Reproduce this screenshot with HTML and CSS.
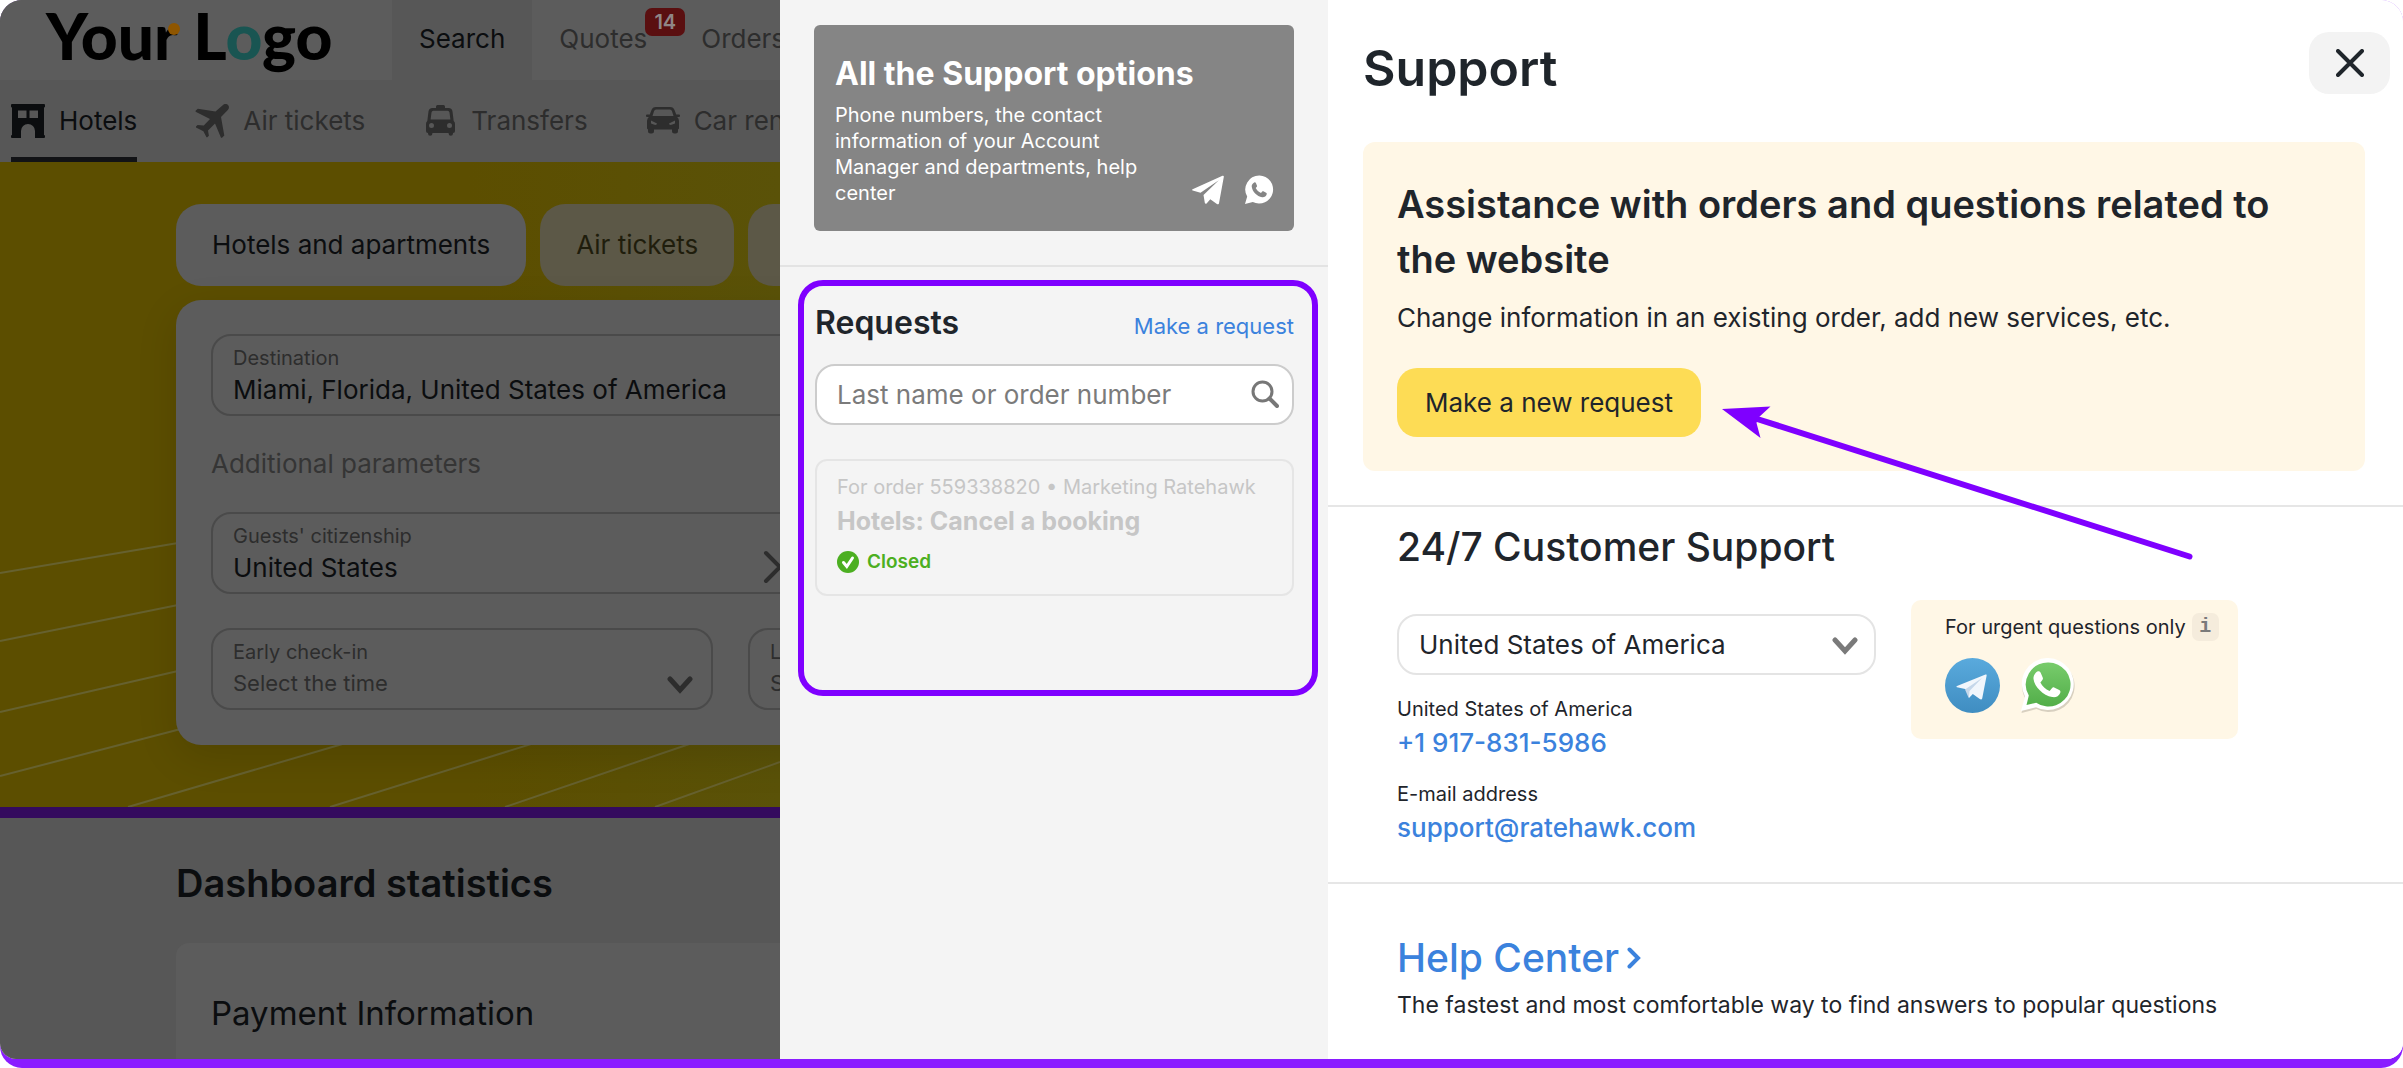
FILE: index.html
```html
<!DOCTYPE html>
<html lang="en">
<head>
<meta charset="utf-8">
<meta name="viewport" content="width=device-width, initial-scale=1">
<title>Support</title>
<link rel="stylesheet" href="styles.css">
</head>
<body>
<div class="frame">
  <div class="columns">

    <div class="site">
      <header class="site-header">
        <a class="logo" href="#">You<span class="logo-r">r</span> L<span class="logo-o">o</span>go</a>
        <nav class="tabs" aria-label="Main">
          <a class="tab tab-active" href="#">Search</a>
          <a class="tab" href="#">Quotes<span class="badge">14</span></a>
          <a class="tab" href="#">Orders</a>
        </nav>
      </header>

      <nav class="products" aria-label="Products">
        <a class="product product-active" href="#">
          <svg class="product-icon" viewBox="0 0 34 34" fill="currentColor"><path fill-rule="evenodd" d="M1 0h32a1 1 0 0 1 1 1v1.500a1 1 0 0 1-1 1V31a1 1 0 0 1 1 1v1a1 1 0 0 1-1 1h-9v-7a7 7 0 0 0-14 0v7H1a1 1 0 0 1-1-1v-1a1 1 0 0 1 1-1V3.500a1 1 0 0 1-1-1V1a1 1 0 0 1 1-1ZM7 6.500V14h8.500V6.500ZM18.500 6.500V14H27V6.500Z"/></svg>
          <span>Hotels</span>
        </a>
        <a class="product" href="#">
          <svg class="product-icon" viewBox="0 0 34 34" fill="currentColor"><path d="M33 1c1.400 1.400 1.200 3.400-.2 4.900L26 13l3.300 18.500-2.300 2.300h-1L20 19.500l-7 7 .9 5.200-1.600 1.600h-.8L8.400 27.300 1 23.400v-.9l1.600-1.600 6.200.7 6.200-6.700L.6 7.800v-1l2.200-2 17.700 2.700L28 1c1.500-1.400 3.600-1.400 5 0Z"/></svg>
          <span>Air tickets</span>
        </a>
        <a class="product" href="#">
          <svg class="product-icon" viewBox="0 0 34 34" fill="currentColor"><path fill-rule="evenodd" d="M13 2.500a1.500 1.500 0 0 1 1.500-1.500h6A1.500 1.500 0 0 1 22 2.500V4h3.500a4 4 0 0 1 4 3.500l1.200 9.500a4 4 0 0 1 1.300 3v7a2 2 0 0 1-2 2v.5a2.200 2.200 0 0 1-4.400 0V29H9.400v.5a2.200 2.200 0 0 1-4.400 0V29a2 2 0 0 1-2-2v-7a4 4 0 0 1 1.300-3l1.200-9.500a4 4 0 0 1 4-3.500H13ZM10.500 6.800a2 2 0 0 0-2 1.700L7.600 15.500h19.800l-.9-7a2 2 0 0 0-2-1.700ZM8.500 19a2.500 2.500 0 1 0 0 5 2.500 2.500 0 0 0 0-5ZM26.500 19a2.500 2.500 0 1 0 0 5 2.500 2.500 0 0 0 0-5Z"/></svg>
          <span>Transfers</span>
        </a>
        <a class="product" href="#">
          <svg class="product-icon" viewBox="0 0 34 34" fill="currentColor"><path fill-rule="evenodd" d="M10 3h14a5 5 0 0 1 4.700 3.400l1.500 4.100H33a1 1 0 0 1 1 1V12a1 1 0 0 1-1 1h-1.800A6 6 0 0 1 33 17v7.500l-1 1V27a2.500 2.500 0 0 1-2.500 2.500h-1A2.500 2.500 0 0 1 26 27v-1.500H8V27a2.500 2.500 0 0 1-2.500 2.500h-1A2.500 2.500 0 0 1 2 27v-1.500l-1-1V17a6 6 0 0 1 1.800-4H1a1 1 0 0 1-1-1v-.5a1 1 0 0 1 1-1h2.800l1.500-4.100A5 5 0 0 1 10 3ZM10.200 5.500A2.500 2.500 0 0 0 8 7.200L6.500 12h21L26 7.200a2.500 2.500 0 0 0-2.200-1.700ZM5 16.500v3l3.500 1.300c1.500.4 2.500-.3 2.500-1.300ZM29 16.500v3l-3.500 1.300c-1.500.4-2.500-.3-2.500-1.300Z"/></svg>
          <span>Car rental</span>
        </a>
      </nav>

      <section class="hero">
        <svg class="hero-lines" viewBox="0 0 780 645" preserveAspectRatio="xMinYMax slice" aria-hidden="true">
          <path d="M0 411 178 381M0 479 178 443M0 550 178 509M0 614 200 562M128 645 380 571M330 645 560 573M505 645 710 575M655 645 780 600" fill="none" stroke="#66612f" stroke-width="2"/>
        </svg>
        <div class="search-tabs">
          <button class="search-tab search-tab-active" type="button">Hotels and apartments</button>
          <button class="search-tab" type="button">Air tickets</button>
          <button class="search-tab" type="button" aria-label="Transfers"></button>
        </div>
        <form class="search-card">
          <div class="field">
            <label for="destination">Destination</label>
            <input id="destination" type="text" value="Miami, Florida, United States of America">
          </div>
          <p class="search-more">Additional parameters</p>
          <div class="field">
            <label for="citizenship">Guests' citizenship</label>
            <input id="citizenship" type="text" value="United States">
            <svg class="field-next" viewBox="0 0 20 34"><path d="m3 3 14 14L3 31" fill="none" stroke="#2d2d2d" stroke-width="4" stroke-linecap="round"/></svg>
          </div>
          <div class="field-row">
            <div class="field">
              <label for="checkin">Early check-in</label>
              <select id="checkin"><option>Select the time</option></select>
              <svg class="field-arrow" viewBox="0 0 26 18"><path d="m3 3 10 11L23 3" fill="none" stroke="#2d2d2d" stroke-width="5" stroke-linecap="round"/></svg>
            </div>
            <div class="field">
              <label for="checkout">Late check-out</label>
              <select id="checkout"><option>Select the time</option></select>
            </div>
          </div>
        </form>
      </section>

      <section class="stats">
        <h2>Dashboard statistics</h2>
        <div class="stats-card"><h3>Payment Information</h3></div>
      </section>
    </div>

    <aside class="requests-panel">
      <div class="options-wrap">
        <a class="options" href="#">
          <strong>All the Support options</strong>
          <span class="options-text">Phone numbers, the contact information of your Account Manager and departments, help center</span>
          <span class="options-icons">
            <svg width="32" height="30" viewBox="0 0 32 30" fill="#fff"><path d="M.6 14.200 30.500.8c.9-.4 1.500.1 1.300 1.100L27 28.200c-.2 1.200-1.200 1.500-2.100.8l-6.600-4.800-3.500 4c-.8.9-1.800.6-2-.5L11.500 20 26.800 5.200 8.500 17.800.7 15.500c-.8-.2-.8-.9-.1-1.300Z"/></svg>
            <svg width="30" height="30" viewBox="0 0 30 30"><path d="M15.500.5A14 14 0 0 0 3.200 21.500L1 29l7.800-2A14 14 0 1 0 15.500.5Z" fill="#fff"/><path d="M10.300 7.500c.7-.4 1.400 0 1.700.7l1 2.500c.2.500 0 1-.4 1.400l-.9 1c1.100 2.300 2.900 4 5.300 5l1.200-1.500c.3-.4.8-.5 1.200-.3l2.700 1.400c.6.300.8.800.6 1.500-.5 2-2.500 3.300-4.600 3-5-.6-9.900-5.600-10.400-10.600-.1-1.700 1-3.300 2.600-4.100Z" fill="#858585"/></svg>
          </span>
        </a>
      </div>

      <section class="requests">
        <div class="requests-head">
          <h2>Requests</h2>
          <a href="#">Make a request</a>
        </div>
        <div class="request-search">
          <input type="search" placeholder="Last name or order number" aria-label="Last name or order number">
          <svg width="28" height="28" viewBox="0 0 28 28" fill="none" stroke="#777" stroke-width="3" stroke-linecap="round"><circle cx="11.500" cy="11.500" r="9.500"/><path d="m18.500 18.500 7.500 7.500" stroke-width="4"/></svg>
        </div>
        <article class="request">
          <p class="request-meta">For order 559338820 • Marketing Ratehawk</p>
          <h3>Hotels: Cancel a booking</h3>
          <p class="request-status">
            <svg width="22" height="22" viewBox="0 0 22 22"><circle cx="11" cy="11" r="11" fill="#4caf21"/><path d="m6.500 11.500 3.300 4L15.500 7" fill="none" stroke="#fff" stroke-width="3" stroke-linecap="round"/></svg>
            Closed
          </p>
        </article>
      </section>
    </aside>

    <main class="support">
      <header class="support-head">
        <h1>Support</h1>
        <button class="close" type="button" aria-label="Close">
          <svg width="28" height="28" viewBox="0 0 28 28"><path d="m2 2 24 24M26 2 2 26" fill="none" stroke="#1f252b" stroke-width="4" stroke-linecap="round"/></svg>
        </button>
      </header>

      <section class="assist">
        <h2>Assistance with orders and questions related to the website</h2>
        <p>Change information in an existing order, add new services, etc.</p>
        <div class="assist-action">
          <button class="primary" type="button">Make a new request</button>
          <svg class="pointer" width="474" height="158" viewBox="0 0 474 158" aria-hidden="true"><path d="M2 5 50.500 2.500 38 14 36.500 19 40.500 34Z" fill="#7f00ff"/><path d="m34 14 435.500 138.500" stroke="#7f00ff" stroke-width="6" stroke-linecap="round"/></svg>
        </div>
      </section>

      <section class="contact">
        <h2>24/7 Customer Support</h2>
        <div class="contact-row">
          <div class="contact-main">
            <div class="country">
              <select aria-label="Country"><option>United States of America</option></select>
              <svg width="26" height="18" viewBox="0 0 26 18"><path d="m3 3 10 11L23 3" fill="none" stroke="#7a7a7a" stroke-width="5" stroke-linecap="round"/></svg>
            </div>
            <p class="contact-item">United States of America<a href="tel:+19178315986">+1 917-831-5986</a></p>
            <p class="contact-item">E-mail address<a href="mailto:support@ratehawk.com">support@ratehawk.com</a></p>
          </div>
          <aside class="urgent">
            <p class="urgent-title">For urgent questions only<button class="info" type="button" aria-label="More information">i</button></p>
            <div class="urgent-links">
              <a href="#" aria-label="Telegram"><svg width="55" height="55" viewBox="0 0 55 55"><defs><linearGradient id="tg" x1="0" y1="0" x2="0" y2="1"><stop offset="0" stop-color="#5aaadd"/><stop offset="1" stop-color="#3f8dc1"/></linearGradient></defs><circle cx="27.500" cy="27.500" r="27.500" fill="url(#tg)"/><path d="M12 28 40.500 16.500c.9-.3 1.300.1 1.100 1.200L37.300 40c-.3 1.500-1.200 1.900-2.500 1.100l-7-5.100-3.800 3.900-1.500-8.500L12 29.300c-.7-.3-.7-.9 0-1.300Z" fill="#f1f6fc"/><path d="M20 31.500 37 20 24.500 33l-.7 7.300Z" fill="#c5d7ea"/></svg></a>
              <a href="#" aria-label="WhatsApp"><svg width="55" height="55" viewBox="0 0 55 55"><defs><linearGradient id="wa" x1="0" y1="0" x2="0" y2="1"><stop offset="0" stop-color="#78cc6c"/><stop offset="1" stop-color="#52ae49"/></linearGradient></defs><path d="M28.500 2A26 26 0 0 0 5 40L1.500 55l15-4A26 26 0 1 0 28.500 2Z" fill="#d8d0c0"/><path d="M28.500 0A26 26 0 0 0 5 38.500L1 53l15-3.800A26 26 0 1 0 28.500 0Z" fill="#fff"/><path d="M28 4.500A22 22 0 0 0 8.800 37.500L6.500 47l9.700-2.300A22 22 0 1 0 28 4.500Z" fill="url(#wa)"/><path d="M16 14.500c1.700-1.800 4-1.500 4.800.6l2 4.700c.4 1-.1 1.900-.8 2.700l-1.600 1.900c2 4 5 6.800 9.200 8.500l2.500-2.900c.6-.7 1.300-.8 2.100-.4l5 2.500c1.300.7 1.500 1.700 1 3-1.300 3.400-4.700 4.600-8 4C23 37.400 14.500 28.800 13.500 21c-.3-2.500.8-4.800 2.500-6.500Z" fill="#fff"/></svg></a>
            </div>
          </aside>
        </div>
      </section>

      <section class="help">
        <h2><a href="#">Help Center<svg width="14" height="22" viewBox="0 0 14 22"><path d="m2.500 2.500 8.500 8.500-8.500 8.500" fill="none" stroke="#3b82dd" stroke-width="4" stroke-linecap="round"/></svg></a></h2>
        <p>The fastest and most comfortable way to find answers to popular questions</p>
      </section>
    </main>

  </div>
</div>
</body>
</html>
```
FILE: styles.css
```css
:root {
  --ink: #1f252b;
  --link: #3b82dd;
  --violet: #7f00ff;
  --cream: #fff7e6;
  --dim-white: #5c5c5c;
  --dim-grey: #575757;
  --dim-ink: #0b0d0f;
  --dim-muted: #2d2d2d;
  --dim-line: #4a4a4a;
}

* { box-sizing: border-box; }

body {
  margin: 0;
  background: #fff;
  color: var(--ink);
  font: 26px/36px Inter, Roboto, sans-serif;
}

h1, h2, h3, p { margin: 0; }
a { color: var(--link); text-decoration: none; }
button, input, select { font: inherit; color: inherit; }
button { border: 0; cursor: pointer; }
svg { display: block; flex: none; }

.frame {
  display: flex;
  min-height: 100vh;
  padding-bottom: 9px;
  background: #8a1cff;
  border-radius: 22px;
  overflow: hidden;
}

.columns {
  flex: 1;
  display: grid;
  grid-template-columns: 780fr 548fr 1075fr;
  background: #fff;
  border-radius: 0 0 16px 16px;
  overflow: hidden;
}

/* Page behind the panels */
.site {
  display: flex;
  flex-direction: column;
  min-width: 0;
  overflow: hidden;
  background: var(--dim-grey);
  color: var(--dim-ink);
  white-space: nowrap;
}

.site-header {
  display: flex;
  height: 80px;
  background: var(--dim-white);
}

.logo {
  flex: none;
  width: 392px;
  padding-left: 46px;
  color: #000;
  font: 900 64px/72px Lato, sans-serif;
}

.logo-r { position: relative; }
.logo-r::after {
  content: "";
  position: absolute;
  right: -2px;
  top: 26px;
  width: 12px;
  height: 12px;
  border-radius: 50%;
  background: #8f5600;
}
.logo-o { color: #195552; }

.tabs { display: flex; }

.tab {
  position: relative;
  padding: 20px 27px;
  line-height: 38px;
  color: var(--dim-muted);
}
.tab-active { background: var(--dim-grey); color: var(--dim-ink); }

.badge {
  position: absolute;
  right: -11px;
  top: 8px;
  width: 40px;
  height: 28px;
  border-radius: 7px;
  background: #5a0f10;
  color: #8f8686;
  font-size: 20px;
  font-weight: 600;
  line-height: 28px;
  text-align: center;
}

.products {
  display: flex;
  gap: 58px;
  height: 82px;
  padding-left: 11px;
}

.product {
  display: flex;
  align-items: center;
  gap: 14px;
  padding-top: 4px;
  border-bottom: 5px solid transparent;
  color: var(--dim-muted);
}
.product-active { border-color: #121316; color: var(--dim-ink); }
.product-icon { width: 34px; height: 34px; }

.hero {
  position: relative;
  padding: 42px 0 62px 176px;
  border-bottom: 11px solid #340a5e;
  background: linear-gradient(90deg, #5c4e00 60%, #5a5208);
}

.hero-lines {
  position: absolute;
  inset: 0;
  width: 100%;
  height: 100%;
}

.search-tabs {
  position: relative;
  display: flex;
  gap: 14px;
  margin-bottom: 14px;
}

.search-tab {
  flex: none;
  min-width: 190px;
  height: 82px;
  padding: 0 36px;
  border-radius: 25px;
  background: #5c5847;
  color: #1f1d0c;
}
.search-tab-active { background: var(--dim-white); color: var(--dim-ink); }

.search-card {
  position: relative;
  display: flex;
  flex-direction: column;
  gap: 34px;
  width: 180%;
  padding: 34px 35px 35px;
  border-radius: 25px;
  background: var(--dim-white);
  box-shadow: 0 12px 40px rgba(0, 0, 0, 0.12);
}

.field {
  position: relative;
  height: 82px;
  padding: 10px 20px;
  border: 2px solid var(--dim-line);
  border-radius: 20px;
}
.field label {
  display: block;
  color: var(--dim-muted);
  font-size: 20px;
  line-height: 24px;
}
.field input,
.field select {
  display: block;
  width: 100%;
  height: 38px;
  padding: 0;
  border: 0;
  outline: 0;
  background: none;
  appearance: none;
}
.field select { color: var(--dim-muted); font-size: 22px; }
.field-next { position: absolute; left: 550px; top: 36px; width: 20px; height: 34px; }
.field-arrow { position: absolute; right: 18px; top: 46px; width: 26px; height: 18px; }
.field-row { display: flex; gap: 35px; }
.field-row .field { flex: none; width: 502px; }

.search-more { color: #353535; line-height: 28px; }

.stats {
  flex: 1;
  display: flex;
  flex-direction: column;
  padding: 41px 0 0 176px;
}
.stats h2 { margin-bottom: 36px; font-size: 38px; font-weight: 600; line-height: 48px; }
.stats-card {
  flex: 1;
  padding: 50px 35px 26px;
  border-radius: 13px 0 0 0;
  background: var(--dim-white);
}
.stats-card h3 { font-size: 33px; font-weight: 400; line-height: 40px; }

/* Requests */
.requests-panel { min-width: 0; background: #f4f4f4; }

.options-wrap { padding: 25px 34px 34px; border-bottom: 2px solid #e3e3e3; }

.options {
  position: relative;
  display: block;
  padding: 29px 21px 25px;
  border-radius: 6px;
  background: #858585;
  color: #fff;
  font-size: 20px;
  line-height: 26px;
}
.options strong { display: block; margin-bottom: 8px; font-size: 32px; font-weight: 700; line-height: 40px; }
.options-text { display: block; max-width: 310px; }
.options-icons {
  position: absolute;
  right: 20px;
  bottom: 26px;
  display: flex;
  gap: 20px;
}

.requests {
  margin: 13px 10px 0 18px;
  padding: 17px 18px 94px 11px;
  border: 6px solid var(--violet);
  border-radius: 25px;
}

.requests-head {
  display: flex;
  justify-content: space-between;
  align-items: baseline;
  margin-bottom: 20px;
}
.requests-head h2 { font-size: 32px; font-weight: 600; line-height: 40px; }
.requests-head a { font-size: 22px; }

.request-search { position: relative; margin-bottom: 34px; }
.request-search input {
  display: block;
  width: 100%;
  height: 61px;
  padding: 0 60px 0 20px;
  border: 2px solid #ccc;
  border-radius: 20px;
  background: #fff;
  appearance: none;
}
.request-search input::placeholder { color: #7b7b7b; opacity: 1; }
.request-search svg { position: absolute; right: 15px; top: 16px; }

.request {
  padding: 12px 20px 20px;
  border: 2px solid #e5e5e5;
  border-radius: 12px;
  color: #c6c6c6;
}
.request-meta { font-size: 20px; line-height: 28px; white-space: nowrap; }
.request h3 { margin: 2px 0 11px; font-size: 25px; font-weight: 700; line-height: 36px; }
.request-status {
  display: flex;
  align-items: center;
  gap: 8px;
  color: #4caf21;
  font-size: 19px;
  font-weight: 600;
  line-height: 24px;
}

/* Support */
.support { min-width: 0; background: #fff; }

.support-head {
  display: flex;
  justify-content: space-between;
  align-items: flex-start;
  margin-bottom: 42px;
  padding: 32px 13px 0 35px;
}
.support-head h1 { padding-top: 4px; font-size: 50px; font-weight: 600; line-height: 64px; }

.close {
  display: flex;
  align-items: center;
  justify-content: center;
  width: 81px;
  height: 62px;
  border-radius: 20px;
  background: #f3f3f3;
}

.assist {
  margin: 0 38px 34px 35px;
  padding: 35px 34px 34px;
  border-radius: 12px;
  background: var(--cream);
}
.assist h2 { margin-bottom: 13px; font-size: 38px; font-weight: 600; line-height: 55px; }
.assist p { margin-bottom: 32px; }
.assist-action { position: relative; display: inline-flex; vertical-align: top; }
.pointer { position: absolute; left: 100%; top: 36px; margin-left: 19px; }

.primary {
  height: 69px;
  padding: 0 28px;
  border-radius: 20px;
  background: #fddc55;
}

.contact,
.help { border-top: 2px solid #e6e6e6; }

.contact { padding: 16px 38px 36px 69px; }
.contact h2,
.help h2 { font-size: 39px; font-weight: 500; line-height: 48px; }
.contact h2 { margin-bottom: 29px; }

.contact-row { display: flex; align-items: flex-start; gap: 35px; }
.contact-main { flex: 0 1 479px; padding-top: 14px; }

.country { position: relative; margin-bottom: 20px; }
.country select {
  display: block;
  width: 100%;
  height: 61px;
  padding: 0 60px 0 20px;
  border: 2px solid #e4e4e4;
  border-radius: 20px;
  background: #fff;
  appearance: none;
}
.country svg { position: absolute; right: 18px; top: 23px; pointer-events: none; }

.contact-item { font-size: 20px; line-height: 28px; }
.contact-item + .contact-item { margin-top: 19px; }
.contact-item a {
  display: block;
  margin-top: 2px;
  font-size: 26px;
  font-weight: 500;
  line-height: 36px;
}

.urgent {
  padding: 13px 19px 26px 34px;
  border-radius: 10px;
  background: var(--cream);
}
.urgent-title { display: flex; gap: 6px; font-size: 20px; line-height: 28px; }
.info {
  width: 27px;
  height: 28px;
  padding: 0;
  border-radius: 7px;
  background: #f5ecdc;
  color: #7a7a7a;
  font: 700 20px/28px "Liberation Mono", monospace;
}
.urgent-links { display: flex; gap: 20px; margin-top: 17px; }

.help { padding: 50px 38px 37px 69px; }
.help h2 { margin-bottom: 7px; }
.help h2 a { display: inline-flex; align-items: center; gap: 8px; }
.help p { font-size: 23px; line-height: 32px; }
```
